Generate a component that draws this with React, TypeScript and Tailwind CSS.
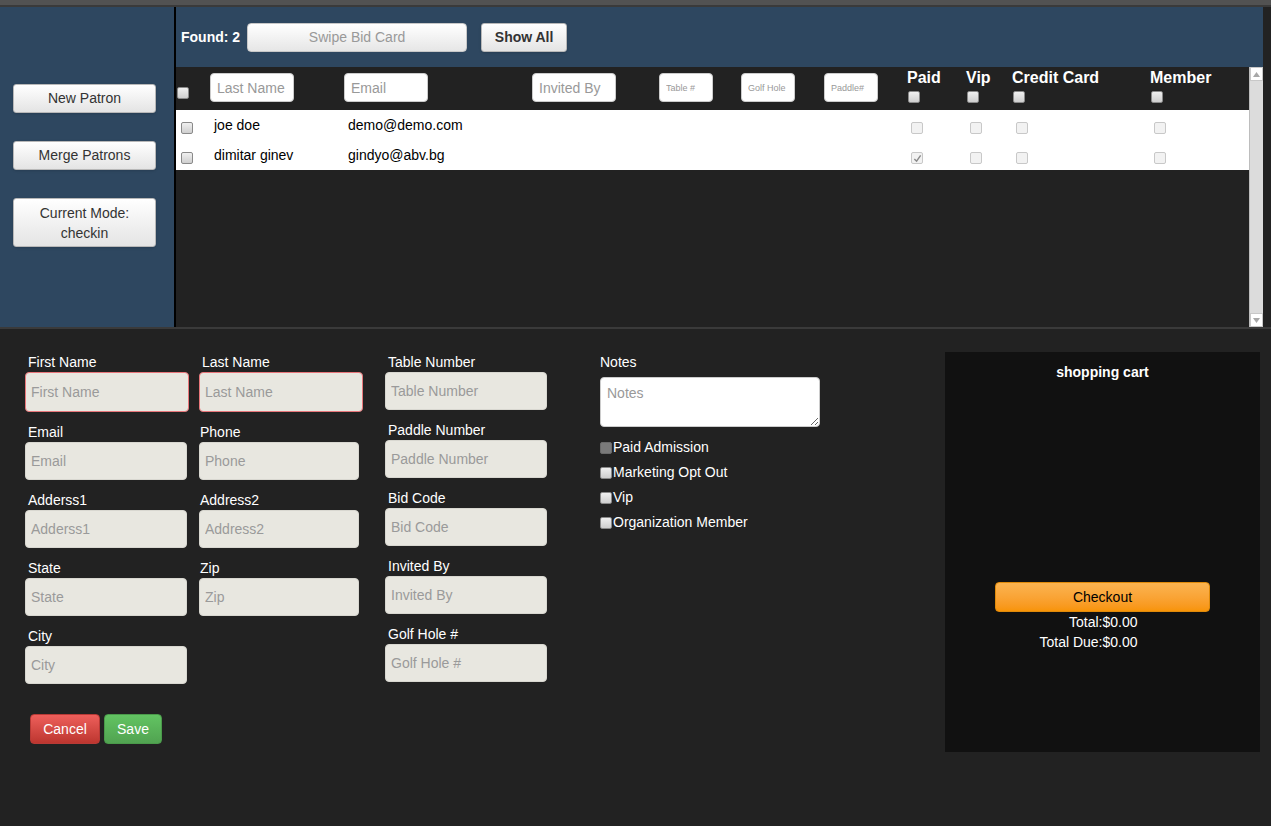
import React from 'react';

const font = { fontFamily: '"Liberation Sans", Arial, sans-serif' };

function Box({ checked = false, dark = false, filled = false }: { checked?: boolean; dark?: boolean; filled?: boolean }) {
    // old-style grey checkbox
    let cls = 'border-[#c8c8c8] bg-[#f2f2f2]';
    if (dark) cls = 'border-[#8a8a8a] bg-gradient-to-b from-[#f0f0f0] to-[#cfcfcf]';
    if (filled) cls = 'border-[#6a6a6a] bg-[#7a7a7a]';
    return (
        <span className={`inline-flex items-center justify-center w-[12px] h-[12px] rounded-[2px] border ${cls}`}>
            {checked && (
                <svg width="9" height="9" viewBox="0 0 10 10">
                    <path d="M1.5 5.5 L4 8 L8.5 1.5" stroke="#8a8a8a" strokeWidth="1.6" fill="none" />
                </svg>
            )}
        </span>
    );
}

const greyBtn = 'rounded-[3px] border border-[#b8b8b8] bg-gradient-to-b from-white to-[#e4e4e4] text-[#333] text-[14px] shadow-sm';

function Field({ label, w, h = 38, error = false, lp = 3 }: { label: string; w: number; h?: number; error?: boolean; lp?: number }) {
    return (
        <div className="flex flex-col mb-[10px]">
            <label style={{ paddingLeft: lp }} className="h-[20px] leading-[20px] text-white text-[14px]">
                {label}
            </label>
            <input
                placeholder={label}
                style={{ width: w, height: h }}
                className={`rounded-[4px] bg-[#e8e7e0] px-[5px] text-[14px] text-[#555] placeholder-[#9a9a9a] outline-none border ${
                    error ? 'border-[#e8767a]' : 'border-[#d8d7d0]'
                }`}
            />
        </div>
    );
}

const rows = [
    { name: 'joe doe', email: 'demo@demo.com', paid: false },
    { name: 'dimitar ginev', email: 'gindyo@abv.bg', paid: true },
];

export default function App() {
    return (
        <div style={font} className="w-[1271px] h-[826px] bg-[#222] flex flex-col overflow-hidden">
            {/* top chrome strip */}
            <div className="h-[5px] bg-[#525252]" />
            <div className="h-[2px] bg-[#3a3a3a]" />

            {/* search / results area */}
            <div className="h-[320px] flex">
                <aside className="w-[174px] bg-[#2e4760] flex flex-col items-start pt-[77px] pl-[13px] gap-[28px]">
                    <button className={`${greyBtn} w-[143px] h-[29px]`}>New Patron</button>
                    <button className={`${greyBtn} w-[143px] h-[29px]`}>Merge Patrons</button>
                    <button className={`${greyBtn} w-[143px] h-[49px] leading-[20px]`}>
                        Current Mode:
                        <br />
                        checkin
                    </button>
                </aside>
                <div className="w-[2px] bg-black" />
                <div className="w-[1087px] flex flex-col">
                    <div className="h-[60px] bg-[#2e4760] flex items-center pl-[5px]">
                        <span className="text-white font-bold text-[14px]">Found: 2</span>
                        <input
                            placeholder="Swipe Bid Card"
                            className="ml-[7px] w-[220px] h-[29px] rounded-[4px] border border-[#c8c8c8] bg-gradient-to-b from-white to-[#e6e6e6] text-center text-[14px] placeholder-[#999] outline-none"
                        />
                        <button className={`${greyBtn} ml-[14px] w-[86px] h-[29px] font-bold`}>Show All</button>
                    </div>
                    <div className="flex-1 flex">
                        <div className="w-[1073px] flex flex-col">
                            {/* column header */}
                            <div className="h-[43px] flex text-white">
                                <div className="w-[34px] pl-[1px] pt-[15px]">
                                    <Box dark />
                                </div>
                                <div className="w-[134px] pt-[6px]">
                                    <input placeholder="Last Name" className="w-[84px] h-[29px] rounded-[4px] border border-[#ccc] bg-white px-[6px] text-[14px] placeholder-[#999] outline-none" />
                                </div>
                                <div className="w-[188px] pt-[6px]">
                                    <input placeholder="Email" className="w-[84px] h-[29px] rounded-[4px] border border-[#ccc] bg-white px-[6px] text-[14px] placeholder-[#999] outline-none" />
                                </div>
                                <div className="w-[127px] pt-[6px]">
                                    <input placeholder="Invited By" className="w-[84px] h-[29px] rounded-[4px] border border-[#ccc] bg-white px-[6px] text-[14px] placeholder-[#999] outline-none" />
                                </div>
                                <div className="w-[82px] pt-[6px]">
                                    <input placeholder="Table #" className="w-[54px] h-[29px] rounded-[4px] border border-[#ccc] bg-white px-[6px] text-[9px] placeholder-[#999] outline-none" />
                                </div>
                                <div className="w-[83px] pt-[6px]">
                                    <input placeholder="Golf Hole" className="w-[54px] h-[29px] rounded-[4px] border border-[#ccc] bg-white px-[6px] text-[9px] placeholder-[#999] outline-none" />
                                </div>
                                <div className="w-[83px] pt-[6px]">
                                    <input placeholder="Paddle#" className="w-[54px] h-[29px] rounded-[4px] border border-[#ccc] bg-white px-[6px] text-[9px] placeholder-[#999] outline-none" />
                                </div>
                                {[
                                    ['Paid', 'w-[59px]'],
                                    ['Vip', 'w-[46px]'],
                                    ['Credit Card', 'w-[138px]'],
                                    ['Member', 'w-[99px]'],
                                ].map(([t, w]) => (
                                    <div key={t} className={`${w} pt-[2px] flex flex-col items-start`}>
                                        <span className="font-bold text-[16px] leading-[18px]">{t}</span>
                                        <span className="mt-[4px] ml-[1px] flex">
                                            <Box dark />
                                        </span>
                                    </div>
                                ))}
                            </div>
                            {/* result rows */}
                            <div className="bg-white">
                                {rows.map((r) => (
                                    <div key={r.email} className="h-[30px] flex items-center text-[14px] text-black">
                                        <div className="w-[34px] pl-[5px] pt-[5px] flex">
                                            <Box dark />
                                        </div>
                                        <div className="w-[134px] pl-[4px]">{r.name}</div>
                                        <div className="w-[188px] pl-[4px]">{r.email}</div>
                                        <div className="w-[127px]" />
                                        <div className="w-[82px]" />
                                        <div className="w-[83px]" />
                                        <div className="w-[83px]" />
                                        <div className="w-[59px] pl-[4px] pt-[6px] flex">
                                            <Box checked={r.paid} />
                                        </div>
                                        <div className="w-[46px] pl-[4px] pt-[6px] flex">
                                            <Box />
                                        </div>
                                        <div className="w-[138px] pl-[4px] pt-[6px] flex">
                                            <Box />
                                        </div>
                                        <div className="w-[99px] pl-[4px] pt-[6px] flex">
                                            <Box />
                                        </div>
                                    </div>
                                ))}
                            </div>
                        </div>
                        {/* scrollbar */}
                        <div className="w-[14px] bg-[#dcdcdc] border-l border-[#bdbdbd] flex flex-col justify-between">
                            <div className="h-[14px] bg-white border border-[#c8c8c8] flex items-center justify-center">
                                <svg width="7" height="5" viewBox="0 0 7 5">
                                    <path d="M0 5 L3.5 0 L7 5 Z" fill="#a8a8a8" />
                                </svg>
                            </div>
                            <div className="h-[14px] bg-white border border-[#c8c8c8] flex items-center justify-center">
                                <svg width="7" height="5" viewBox="0 0 7 5">
                                    <path d="M0 0 L3.5 5 L7 0 Z" fill="#a8a8a8" />
                                </svg>
                            </div>
                        </div>
                    </div>
                </div>
                <div className="flex-1 bg-[#222]" />
            </div>
            <div className="h-[2px] bg-[#3a3a3a]" />

            {/* patron form */}
            <div className="flex-1 flex pt-[23px] pl-[25px]">
                <div className="w-[174px] flex flex-col">
                    <Field label="First Name" w={164} h={40} error />
                    <Field label="Email" w={162} />
                    <Field label="Adderss1" w={162} />
                    <Field label="State" w={162} />
                    <Field label="City" w={162} />
                    <div className="mt-[20px] ml-[5px] flex gap-[4px]">
                        <button className="w-[70px] h-[30px] rounded-[4px] border border-[#b83a36] bg-gradient-to-b from-[#ee5f5b] to-[#bd362f] text-white text-[14px]">
                            Cancel
                        </button>
                        <button className="w-[58px] h-[30px] rounded-[4px] border border-[#4a9a4a] bg-gradient-to-b from-[#62c462] to-[#51a351] text-white text-[14px]">
                            Save
                        </button>
                    </div>
                </div>
                <div className="w-[186px] flex flex-col">
                    <Field label="Last Name" w={164} h={40} error />
                    <Field label="Phone" w={160} lp={1} />
                    <Field label="Address2" w={160} lp={1} />
                    <Field label="Zip" w={160} lp={1} />
                </div>
                <div className="w-[215px] flex flex-col">
                    <Field label="Table Number" w={162} />
                    <Field label="Paddle Number" w={162} />
                    <Field label="Bid Code" w={162} />
                    <Field label="Invited By" w={162} />
                    <Field label="Golf Hole #" w={162} />
                </div>
                <div className="w-[345px] flex flex-col">
                    <label className="h-[20px] leading-[20px] text-white text-[14px]">Notes</label>
                    <textarea
                        placeholder="Notes"
                        className="mt-[5px] w-[220px] h-[50px] rounded-[4px] border border-[#ccc] bg-white px-[6px] py-[5px] text-[14px] placeholder-[#999] outline-none resize"
                    />
                    <div className="mt-[8px] flex flex-col text-white text-[14px]">
                        {['Paid Admission', 'Marketing Opt Out', 'Vip', 'Organization Member'].map((t, i) => (
                            <div key={t} className="h-[25px] flex items-center gap-[1px]">
                                <Box dark={i !== 0} filled={i === 0} />
                                <span>{t}</span>
                            </div>
                        ))}
                    </div>
                </div>
                <div className="w-[315px] h-[400px] bg-[#111] flex flex-col items-center pt-[10px]">
                    <h3 className="text-white font-bold text-[14px] leading-[20px]">shopping cart</h3>
                    <button className="mt-[200px] w-[215px] h-[30px] rounded-[4px] border border-[#e08a0a] bg-gradient-to-b from-[#fbb450] to-[#f89406] text-black text-[14px]">
                        Checkout
                    </button>
                    <div className="w-full grid grid-cols-2 text-white text-[14px] leading-[20px]">
                        <span className="text-right">Total:</span>
                        <span>$0.00</span>
                        <span className="text-right">Total Due:</span>
                        <span>$0.00</span>
                    </div>
                </div>
            </div>
        </div>
    );
}
